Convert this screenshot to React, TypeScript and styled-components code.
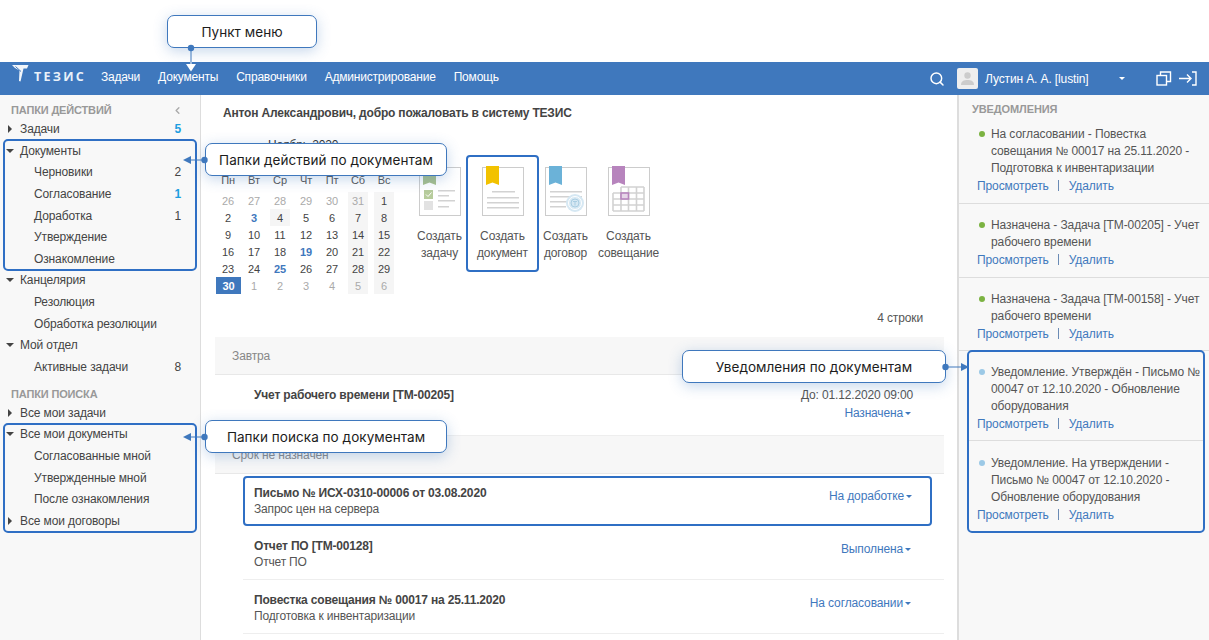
import React from "react";
import styled, { createGlobalStyle } from "styled-components";
import { Search, ChevronLeft } from "lucide-react";

const GlobalStyle = createGlobalStyle`
  html, body { margin: 0; padding: 0; background: #fff; }
  body { font-family: "Liberation Sans", Arial, sans-serif; font-size: 12px; color: #333; letter-spacing: -0.12px; }
  * { box-sizing: border-box; }
`;

const BLUE = "#3f78bd";
const LINE = "#2f6fc4";

// Page frame
const Page = styled.div`
  position: relative;
  width: 1209px;
  height: 640px;
  overflow: hidden;
`;
const TopGap = styled.div`
  height: 62px;
`;
const Header = styled.header`
  height: 33px;
  background: ${BLUE};
  display: flex;
  align-items: center;
  color: #fff;
  padding: 0 12px 0 12px;
`;
const LogoBox = styled.div`
  display: flex;
  align-items: flex-start;
  width: 89px;
  height: 20px;
  margin-top: -9px;
  gap: 5px;
`;
const LogoText = styled.span`
  font-family: "Open Sans", "Liberation Sans", sans-serif;
  font-weight: 700;
  font-size: 12.5px;
  letter-spacing: 2.3px;
  color: #eaf1f9;
  line-height: 1;
  margin-top: 7px;
`;
const Nav = styled.nav`
  display: flex;
  gap: 18px;
  flex: 1;
  margin-top: -4px;
`;
const NavItem = styled.span`
  font-size: 12px;
  letter-spacing: -0.2px;
  color: #fff;
`;
const UserArea = styled.div`
  display: flex;
  align-items: center;
`;
const Avatar = styled.div`
  width: 21px;
  height: 21px;
  border-radius: 2px;
  background: #eee;
  margin-left: 12px;
  display: flex;
  align-items: center;
  justify-content: center;
`;
const UserName = styled.span`
  margin-left: 7px;
  width: 134px;
  font-size: 12px;
`;
const SmallCaret = styled.span`
  display: inline-block;
  border-left: 3px solid transparent;
  border-right: 3px solid transparent;
  border-top: 3px solid currentColor;
`;
const HeaderIcons = styled.div`
  margin-left: 31px;
  display: flex;
  gap: 7px;
  align-items: center;
`;
const Body = styled.div`
  display: flex;
  height: 545px;
`;

// Left folders
const Sidebar = styled.aside`
  width: 201px;
  flex: none;
  background: #f8f8f8;
  border-right: 1px solid #ddd;
  padding: 7.4px 4px 0 4px;
`;
const SectionTitle = styled.div<{ $top?: number }>`
  display: flex;
  align-items: center;
  justify-content: space-between;
  color: #999;
  font-weight: 700;
  font-size: 11px;
  letter-spacing: -0.15px;
  height: 16px;
  padding: 0 13px 0 7px;
  margin-top: ${(p) => p.$top ?? 0}px;
`;
const Row = styled.div<{ $child?: boolean }>`
  display: flex;
  align-items: center;
  height: 21.6px;
  padding-left: ${(p) => (p.$child ? 30 : 4)}px;
  padding-right: 15px;
  font-size: 12px;
  color: #444;
`;
const Caret = styled.span<{ $open?: boolean }>`
  width: 12px;
  flex: none;
  display: flex;
  align-items: center;
  &::before {
    content: "";
    display: block;
    ${(p) =>
      p.$open
        ? `border-left: 4px solid transparent; border-right: 4px solid transparent; border-top: 4px solid #444; margin-left: -2px;`
        : `border-top: 4px solid transparent; border-bottom: 4px solid transparent; border-left: 4px solid #444;`}
  }
`;
const RowLabel = styled.span`
  flex: 1;
`;
const Count = styled.span<{ $hot?: boolean }>`
  color: ${(p) => (p.$hot ? "#1d9ee0" : "#444")};
  font-weight: ${(p) => (p.$hot ? 700 : 400)};
`;
const Framed = styled.div`
  outline: 2px solid ${LINE};
  outline-offset: -1px;
  border-radius: 4px;
`;

// Center column
const Main = styled.main`
  flex: 1;
  padding: 10px 13px 0 14px;
  min-width: 0;
`;
const Welcome = styled.div`
  font-weight: 700;
  letter-spacing: -0.17px;
  line-height: 17px;
  padding-left: 8px;
  color: #444;
`;
const TopRow = styled.div`
  display: flex;
  margin-top: 15px;
`;
const Calendar = styled.div`
  width: 193px;
  flex: none;
`;
const MonthTitle = styled.div`
  line-height: 17px;
  padding-left: 53px;
  margin-bottom: 18px;
`;
const CalGrid = styled.div`
  display: grid;
  grid-template-columns: repeat(7, 26px);
  grid-template-rows: 20px repeat(6, 17px);
  width: 182px;
`;
const WeekDay = styled.div`
  text-align: center;
  line-height: 17px;
  font-size: 11px;
  color: #555;
`;
const Day = styled.div<{ $kind?: string; $off?: boolean; $weekend?: boolean; $today?: boolean; $hl?: boolean }>`
  display: flex;
  align-items: center;
  justify-content: center;
  font-size: 11px;
  letter-spacing: 0;
  margin: ${(p) => (p.$today ? "0 0 0 1px" : "0 3px")};
  background: ${(p) => (p.$today ? BLUE : p.$weekend || p.$hl ? "#f5f5f5" : "transparent")};
  color: ${(p) => (p.$today ? "#fff" : p.$off ? "#aaa" : p.$kind === "blue" ? "#3f78bd" : "#444")};
  font-weight: ${(p) => (p.$today || p.$kind === "blue" ? 700 : 400)};
`;
const Cards = styled.div`
  display: flex;
  height: 131px;
  padding-top: 29px;
`;
const Card = styled.div<{ $framed?: boolean }>`
  position: relative;
  width: 63px;
  display: flex;
  flex-direction: column;
  align-items: center;
  text-align: center;
  line-height: 17px;
  color: #555;
  font-size: 12px;
  ${(p) =>
    p.$framed &&
    `&::after { content: ""; position: absolute; left: -5px; right: -5px; top: -11px; height: 113px; border: 2px solid ${LINE}; border-radius: 4px; }`}
`;
const CardLabel = styled.div`
  margin-top: 11px;
`;
const RowsInfo = styled.div`
  text-align: right;
  line-height: 17px;
  margin-top: 16px;
  padding-right: 21px;
  color: #555;
`;
const GroupHead = styled.div<{ $top?: number }>`
  height: 38px;
  margin-top: ${(p) => p.$top ?? 0}px;
  background: #f7f7f7;
  border-bottom: 1px solid #e8e8e8;
  display: flex;
  align-items: center;
  padding-left: 17px;
  color: #888;
`;
const TaskRow = styled.div<{ $h: number; $framed?: boolean }>`
  height: ${(p) => p.$h}px;
  margin-left: 28px;
  margin-right: ${(p) => (p.$framed ? 12 : 0)}px;
  padding: 12px 33px 0 11px;
  display: flex;
  align-items: flex-start;
  justify-content: space-between;
  border-bottom: 1px solid #eee;
  line-height: 17px;
  ${(p) => p.$framed && `border: 2px solid ${LINE}; border-radius: 4px; margin-top: 2px; padding: 7px 18px 0 9px;`}
`;
const TaskTitle = styled.div`
  font-weight: 700;
  letter-spacing: -0.17px;
  line-height: 16px;
  color: #444;
`;
const TaskSub = styled.div`
  color: #555;
  letter-spacing: -0.18px;
`;
const TaskSide = styled.div`
  display: flex;
  flex-direction: column;
  align-items: flex-end;
  gap: 1px;
  color: #555;
  letter-spacing: -0.15px;
`;
const DueDate = styled.span`
  margin-right: -2px;
`;
const Status = styled.span<{ $shift?: number }>`
  color: ${BLUE};
  display: inline-flex;
  align-items: center;
  gap: 2px;
  margin-top: ${(p) => p.$shift ?? 0}px;
`;

// Right notifications
const Notices = styled.aside`
  width: 252px;
  flex: none;
  background: #f8f8f8;
  border-left: 2px solid #ddd;
  padding-top: 6px;
  letter-spacing: -0.1px;
`;
const NoticeHead = styled.div`
  color: #999;
  font-weight: 700;
  font-size: 11px;
  letter-spacing: -0.1px;
  height: 16px;
  line-height: 16px;
  padding-left: 13px;
  margin-bottom: 9px;
`;
const FramedNotices = styled.div`
  margin: 0 5px 0 9px;
  outline: 2px solid ${LINE};
  outline-offset: -1px;
  border-radius: 4px;
`;
const Notice = styled.div<{ $h: number; $pad?: number; $line?: boolean; $inner?: boolean }>`
  height: ${(p) => p.$h}px;
  padding: ${(p) => p.$pad ?? 0}px ${(p) => (p.$inner ? 0 : 5)}px 0 ${(p) => (p.$inner ? 9 : 18)}px;
  border-bottom: ${(p) => (p.$line ? "1px solid #ddd" : "none")};
  line-height: 17px;
  color: #555;
`;
const NoticeText = styled.div<{ $color: string }>`
  position: relative;
  padding: 0 0 0 14px;
  &::before {
    content: "";
    position: absolute;
    left: 2px;
    top: 5px;
    width: 6px;
    height: 6px;
    border-radius: 50%;
    background: ${(p) => p.$color};
  }
`;
const NoticeLinks = styled.div`
  display: flex;
  align-items: center;
  height: 17px;
  margin-top: 1px;
  color: ${BLUE};
`;
const Sep = styled.span`
  width: 1px;
  height: 11px;
  background: #6b8bb5;
  margin: -3px 10px 0 9px;
`;

// Annotation bubbles lying over the page
const Bubble = styled.div<{ $x: number; $y: number; $w: number }>`
  position: absolute;
  left: ${(p) => p.$x}px;
  top: ${(p) => p.$y}px;
  width: ${(p) => p.$w}px;
  height: 33px;
  border: 1.5px solid ${BLUE};
  border-radius: 7px;
  background: #fff;
  box-shadow: 0 3px 14px rgba(63, 120, 189, 0.3);
  display: flex;
  align-items: center;
  justify-content: center;
  font-family: Inter, "Noto Sans", sans-serif;
  font-size: 13.5px;
  letter-spacing: 0.05px;
  color: #1c1c1c;
`;
const Pointer = styled.svg<{ $x: number; $y: number }>`
  position: absolute;
  left: ${(p) => p.$x}px;
  top: ${(p) => p.$y}px;
`;

const LeftPointer = ({ x, y }: { x: number; y: number }) => (
  <Pointer $x={x} $y={y} width={25} height={12} viewBox="0 0 25 12">
    <path d="M0 6l8-4v8z" fill={BLUE} />
    <path d="M8 6h15" stroke={BLUE} />
    <circle cx={21.5} cy={6} r={3.2} fill={BLUE} />
  </Pointer>
);

const BookMark = ({ color }: { color: string }) => (
  <path d="M5 0h13v19l-6.500-2.500L5 19z" fill={color} />
);
const DocFrame = ({ children }: { children: React.ReactNode }) => (
  <svg width={44} height={51} viewBox="0 0 44 51">
    <rect x={1.5} y={1.5} width={41} height={48} fill="#fff" stroke="#ccc" />
    {children}
  </svg>
);
const gray = "#d2d2d2";
const TextLine = ({ x, y, w }: { x: number; y: number; w: number }) => (
  <rect x={x} y={y} width={w} height={1.5} fill={gray} />
);

const TaskIcon = () => (
  <DocFrame>
    <BookMark color="#a8c08c" />
    <rect x={6} y={24} width={9} height={9} fill="#b7cc9c" />
    <path d="M8 28.500l2 2 3.500-4" stroke="#fff" fill="none" />
    <rect x={6} y={35} width={9} height={9} fill="#e2e2e2" />
    <TextLine x={20} y={24} w={17} />
    <TextLine x={20} y={29} w={11} />
    <TextLine x={20} y={34} w={17} />
    <TextLine x={20} y={40} w={11} />
  </DocFrame>
);
const DocIcon = () => (
  <DocFrame>
    <BookMark color="#f2c200" />
    <TextLine x={11} y={25} w={23} />
    <TextLine x={6} y={31} w={32} />
    <TextLine x={6} y={36} w={32} />
    <TextLine x={6} y={41} w={32} />
  </DocFrame>
);
const ContractIcon = () => (
  <DocFrame>
    <BookMark color="#6bb2d8" />
    <TextLine x={6} y={25} w={32} />
    <TextLine x={6} y={30} w={32} />
    <TextLine x={6} y={35} w={22} />
    <TextLine x={6} y={40} w={16} />
    <circle cx={31} cy={37} r={9} fill="#d6e8f3" />
    <circle cx={31} cy={37} r={6.500} fill="none" stroke="#fff" />
    <circle cx={31} cy={37} r={4} fill="none" stroke="#a9cde2" />
    <path d="M29 35.500h4M31 35.500v4" stroke="#a9cde2" />
  </DocFrame>
);
const MeetingIcon = () => (
  <DocFrame>
    <path
      d="M14 21h23M6 27h31M6 33h31M6 39h31M6 45h31M6 27v18M14 21v24M21.500 21v24M29.500 21v24M37 21v24"
      stroke={gray}
      strokeWidth={1.6}
      fill="none"
    />
    <rect x={14} y={27} width={7.500} height={6} fill="#e6d5e8" stroke="#b784bd" strokeWidth={1.600} />
    <BookMark color="#b784bd" />
  </DocFrame>
);

const Logo = () => (
  <svg width={17} height={18} viewBox="0 0 17 18">
    <path d="M0 1h16.500L15 4.500h-3.500L8.500 17.500 7 17l.5-10.500L3 4z" fill="#f2f6fb" />
    <path d="M3.500 2.500L9 7.500" stroke={BLUE} strokeWidth={1} />
  </svg>
);

const weekdays = ["Пн", "Вт", "Ср", "Чт", "Пт", "Сб", "Вс"];
const days: { n: number; off?: boolean; kind?: string; hl?: boolean; today?: boolean }[] = [
  { n: 26, off: true }, { n: 27, off: true }, { n: 28, off: true }, { n: 29, off: true }, { n: 30, off: true }, { n: 31, off: true }, { n: 1 },
  { n: 2 }, { n: 3, kind: "blue" }, { n: 4, hl: true }, { n: 5 }, { n: 6 }, { n: 7 }, { n: 8 },
  { n: 9 }, { n: 10 }, { n: 11 }, { n: 12 }, { n: 13 }, { n: 14 }, { n: 15 },
  { n: 16 }, { n: 17 }, { n: 18 }, { n: 19, kind: "blue" }, { n: 20 }, { n: 21 }, { n: 22 },
  { n: 23 }, { n: 24 }, { n: 25, kind: "blue" }, { n: 26 }, { n: 27 }, { n: 28 }, { n: 29 },
  { n: 30, today: true }, { n: 1, off: true }, { n: 2, off: true }, { n: 3, off: true }, { n: 4, off: true }, { n: 5, off: true }, { n: 6, off: true },
];

const Folder = ({ label, count, hot, caret, child }: { label: string; count?: number; hot?: boolean; caret?: "open" | "closed"; child?: boolean }) => (
  <Row $child={child}>
    {caret && <Caret $open={caret === "open"} />}
    <RowLabel>{label}</RowLabel>
    {count !== undefined && <Count $hot={hot}>{count}</Count>}
  </Row>
);

const Links = () => (
  <NoticeLinks>
    Просмотреть
    <Sep />
    Удалить
  </NoticeLinks>
);

const StatusLink = ({ children, shift }: { children: string; shift?: number }) => (
  <Status $shift={shift}>
    {children}
    <SmallCaret />
  </Status>
);

export default function App() {
  return (
    <Page>
      <GlobalStyle />
      <TopGap />
      <Header>
        <LogoBox>
          <Logo />
          <LogoText>ТЕЗИС</LogoText>
        </LogoBox>
        <Nav>
          {["Задачи", "Документы", "Справочники", "Администрирование", "Помощь"].map((n) => (
            <NavItem key={n}>{n}</NavItem>
          ))}
        </Nav>
        <UserArea>
          <Search size={16} strokeWidth={2.2} color="#fff" />
          <Avatar>
            <svg width={15} height={15} viewBox="0 0 15 15">
              <circle cx={7.5} cy={4.5} r={3.2} fill="#ccc" />
              <path d="M1 14c0-4 3-5 6.500-5s6.500 1 6.500 5z" fill="#ccc" />
            </svg>
          </Avatar>
          <UserName>Лустин А. А. [lustin]</UserName>
          <SmallCaret />
          <HeaderIcons>
            <svg width={16} height={15} viewBox="0 0 16 15" fill="none" stroke="#fff" strokeWidth={1.4}>
              <rect x={1} y={4.500} width={9.500} height={9.500} />
              <path d="M4.500 4V1h10v9.500h-3.500" />
            </svg>
            <svg width={18} height={15} viewBox="0 0 18 15" fill="none" stroke="#fff" strokeWidth={1.4}>
              <path d="M0 7.500h11M8 3.500l4 4-4 4M13 1h4v13h-4" />
            </svg>
          </HeaderIcons>
        </UserArea>
      </Header>
      <Body>
        <Sidebar>
          <SectionTitle>
            ПАПКИ ДЕЙСТВИЙ
            <ChevronLeft size={11} strokeWidth={3} color="#aaa" />
          </SectionTitle>
          <Folder label="Задачи" caret="closed" count={5} hot />
          <Framed>
            <Folder label="Документы" caret="open" />
            <Folder label="Черновики" child count={2} />
            <Folder label="Согласование" child count={1} hot />
            <Folder label="Доработка" child count={1} />
            <Folder label="Утверждение" child />
            <Folder label="Ознакомление" child />
          </Framed>
          <Folder label="Канцелярия" caret="open" />
          <Folder label="Резолюция" child />
          <Folder label="Обработка резолюции" child />
          <Folder label="Мой отдел" caret="open" />
          <Folder label="Активные задачи" child count={8} />
          <SectionTitle $top={8.5}>ПАПКИ ПОИСКА</SectionTitle>
          <Folder label="Все мои задачи" caret="closed" />
          <Framed>
            <Folder label="Все мои документы" caret="open" />
            <Folder label="Согласованные мной" child />
            <Folder label="Утвержденные мной" child />
            <Folder label="После ознакомления" child />
            <Folder label="Все мои договоры" caret="closed" />
          </Framed>
        </Sidebar>
        <Main>
          <Welcome>Антон Александрович, добро пожаловать в систему ТЕЗИС</Welcome>
          <TopRow>
            <Calendar>
              <MonthTitle>Ноябрь 2020</MonthTitle>
              <CalGrid>
                {weekdays.map((d) => (
                  <WeekDay key={d}>{d}</WeekDay>
                ))}
                {days.map((d, i) => (
                  <Day key={i} $off={d.off} $kind={d.kind} $hl={d.hl} $today={d.today} $weekend={i % 7 >= 5}>
                    {d.n}
                  </Day>
                ))}
              </CalGrid>
            </Calendar>
            <Cards>
              <Card>
                <TaskIcon />
                <CardLabel>Создать<br />задачу</CardLabel>
              </Card>
              <Card $framed>
                <DocIcon />
                <CardLabel>Создать<br />документ</CardLabel>
              </Card>
              <Card>
                <ContractIcon />
                <CardLabel>Создать<br />договор</CardLabel>
              </Card>
              <Card>
                <MeetingIcon />
                <CardLabel>Создать<br />совещание</CardLabel>
              </Card>
            </Cards>
          </TopRow>
          <RowsInfo>4 строки</RowsInfo>
          <GroupHead $top={10}>Завтра</GroupHead>
          <TaskRow $h={61}>
            <TaskTitle>Учет рабочего времени [ТМ-00205]</TaskTitle>
            <TaskSide>
              <DueDate>До: 01.12.2020 09:00</DueDate>
              <StatusLink>Назначена</StatusLink>
            </TaskSide>
          </TaskRow>
          <GroupHead>Срок не назначен</GroupHead>
          <TaskRow $h={50} $framed>
            <div>
              <TaskTitle>Письмо № ИСХ-0310-00006 от 03.08.2020</TaskTitle>
              <TaskSub>Запрос цен на сервера</TaskSub>
            </div>
            <StatusLink shift={3}>На доработке</StatusLink>
          </TaskRow>
          <TaskRow $h={54}>
            <div>
              <TaskTitle>Отчет ПО [ТМ-00128]</TaskTitle>
              <TaskSub>Отчет ПО</TaskSub>
            </div>
            <StatusLink shift={3}>Выполнена</StatusLink>
          </TaskRow>
          <TaskRow $h={54}>
            <div>
              <TaskTitle>Повестка совещания № 00017 на 25.11.2020</TaskTitle>
              <TaskSub>Подготовка к инвентаризации</TaskSub>
            </div>
            <StatusLink shift={3}>На согласовании</StatusLink>
          </TaskRow>
        </Main>
        <Notices>
          <NoticeHead>УВЕДОМЛЕНИЯ</NoticeHead>
          <Notice $h={78} $pad={0} $line>
            <NoticeText $color="#7cb342">На согласовании - Повестка совещания № 00017 на 25.11.2020 - Подготовка к инвентаризации</NoticeText>
            <Links />
          </Notice>
          <Notice $h={74} $pad={13} $line>
            <NoticeText $color="#7cb342">Назначена - Задача [ТМ-00205] - Учет рабочего времени</NoticeText>
            <Links />
          </Notice>
          <Notice $h={73} $pad={13} $line>
            <NoticeText $color="#7cb342">Назначена - Задача [ТМ-00158] - Учет рабочего времени</NoticeText>
            <Links />
          </Notice>
          <FramedNotices>
            <Notice $h={90} $pad={13} $line $inner>
              <NoticeText $color="#9cc9e6">Уведомление. Утверждён - Письмо № 00047 от 12.10.2020 - Обновление оборудования</NoticeText>
              <Links />
            </Notice>
            <Notice $h={91} $pad={14} $inner>
              <NoticeText $color="#9cc9e6">Уведомление. На утверждении - Письмо № 00047 от 12.10.2020 - Обновление оборудования</NoticeText>
              <Links />
            </Notice>
          </FramedNotices>
        </Notices>
      </Body>

      <Bubble $x={167} $y={15} $w={150}>Пункт меню</Bubble>
      <Pointer $x={185} $y={44} width={12} height={28} viewBox="0 0 12 28">
        <circle cx={6} cy={4} r={3.2} fill={BLUE} />
        <path d="M6 4v14" stroke={BLUE} />
        <path d="M6 18v2" stroke="#fff" />
        <path d="M1 20h10l-5 7.500z" fill="#fff" />
      </Pointer>
      <Bubble $x={205} $y={143} $w={242}>Папки действий по документам</Bubble>
      <LeftPointer x={183} y={154} />
      <Bubble $x={205} $y={420} $w={242}>Папки поиска по документам</Bubble>
      <LeftPointer x={183} y={431} />
      <Bubble $x={682} $y={350} $w={264}>Уведомления по документам</Bubble>
      <Pointer $x={942} $y={361} width={27} height={12} viewBox="0 0 27 12">
        <circle cx={3.5} cy={6} r={3.2} fill={BLUE} />
        <path d="M3 6h17" stroke={BLUE} />
        <path d="M27 6l-8-4v8z" fill={BLUE} />
      </Pointer>
    </Page>
  );
}
